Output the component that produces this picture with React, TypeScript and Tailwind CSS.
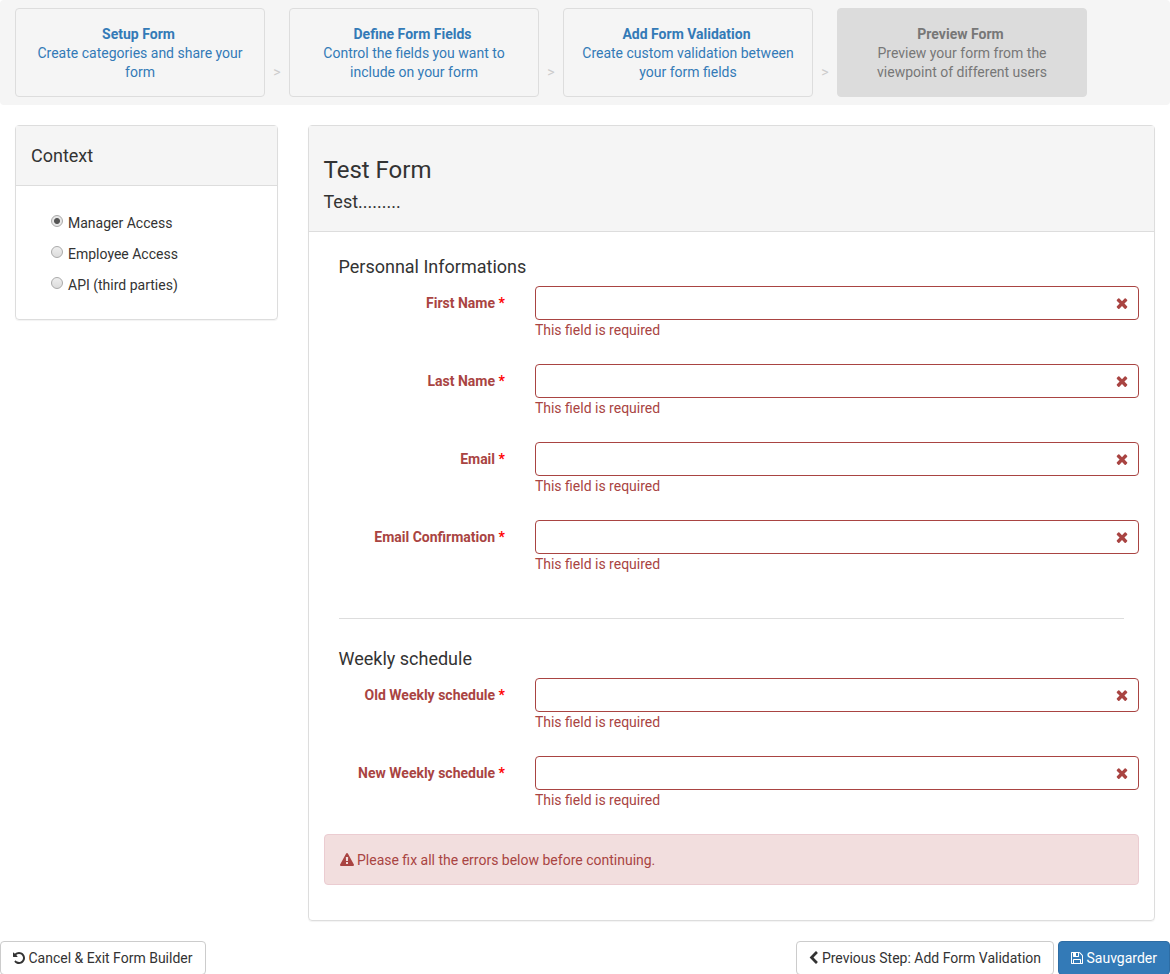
import { Fragment, useState } from "react";

const icons = {
  undo: "M1664 896q0 156-61 298t-164 245-245 164-298 61q-172 0-327-72.5t-264-204.5q-7-10-6.5-22.5t8.5-20.5l137-138q10-9 25-9 16 2 23 12 73 95 179 147t225 52q104 0 198.5-40.5t163.5-109.5 109.5-163.5 40.5-198.5-40.5-198.5-109.5-163.5-163.5-109.5-198.5-40.5q-98 0-188 35.5t-160 101.5l137 138q31 30 14 69-17 40-59 40h-448q-26 0-45-19t-19-45v-448q0-42 40-59 39-17 69 14l130 129q107-101 244.5-156.5t284.5-55.5q156 0 298 61t245 164 164 245 61 298z",
  chevronLeft:
    "M1427 301l-531 531 531 531q19 19 19 45t-19 45l-166 166q-19 19-45 19t-45-19l-742-742q-19-19-19-45t19-45l742-742q19-19 45-19t45 19l166 166q19 19 19 45t-19 45z",
  save: "M512 1536h768v-384h-768v384zm896 0h128v-896q0-14-10-38.5t-20-34.5l-281-281q-10-10-34-20t-39-10v416q0 40-28 68t-68 28h-576q-40 0-68-28t-28-68v-416h-128v1280h128v-416q0-40 28-68t68-28h832q40 0 68 28t28 68v416zm-384-928v-320q0-13-9.5-22.5t-22.5-9.5h-192q-13 0-22.5 9.5t-9.5 22.5v320q0 13 9.5 22.5t22.5 9.5h192q13 0 22.5-9.5t9.5-22.5zm640 32v928q0 40-28 68t-68 28h-1344q-40 0-68-28t-28-68v-1344q0-40 28-68t68-28h928q40 0 88 20t76 48l280 280q28 28 48 76t20 88z",
  warning:
    "M1024 1375v-190q0-14-9.5-23.5t-22.5-9.5h-192q-13 0-22.5 9.5t-9.5 23.5v190q0 14 9.5 23.5t22.5 9.5h192q13 0 22.5-9.5t9.5-23.5zm-2-374l18-459q0-12-10-19-13-11-24-11h-220q-11 0-24 11-10 7-10 21l17 457q0 10 10 16.5t24 6.5h185q14 0 23.5-6.5t10.5-16.5zm-14-934l768 1408q35 63-2 126-17 29-46.5 46t-63.5 17h-1536q-34 0-63.5-17t-46.5-46q-37-63-2-126l768-1408q17-31 47-49t65-18 65 18 47 49z",
  times:
    "M1490 1322q0 40-28 68l-136 136q-28 28-68 28t-68-28l-294-294-294 294q-28 28-68 28t-68-28l-136-136q-28-28-28-68t28-68l294-294-294-294q-28-28-28-68t28-68l136-136q28-28 68-28t68 28l294 294 294-294q28-28 68-28t68 28l136 136q28 28 28 68t-28 68l-294 294 294 294q28 28 28 68z",
};

function Icon({
  name,
  viewBox = "0 0 1792 1792",
  className,
}: {
  name: keyof typeof icons;
  viewBox?: string;
  className: string;
}) {
  return (
    <svg viewBox={viewBox} fill="currentColor" aria-hidden="true" className={className}>
      <path d={icons[name]} />
    </svg>
  );
}

const steps = [
  { title: "Setup Form", text: "Create categories and share your form" },
  { title: "Define Form Fields", text: "Control the fields you want to include on your form" },
  { title: "Add Form Validation", text: "Create custom validation between your form fields" },
  { title: "Preview Form", text: "Preview your form from the viewpoint of different users", active: true },
];

function Steps() {
  return (
    <nav className="flex items-end rounded bg-[#f5f5f5] px-[15px] py-2">
      {steps.map((step, i) => (
        <Fragment key={step.title}>
          {i > 0 && <span className="w-6 shrink-0 pb-[15px] text-center leading-[19px] text-[#ccc]">&gt;</span>}
          <a
            href="#"
            aria-current={step.active ? "step" : undefined}
            className={`w-[250px] rounded border px-[15px] pt-4 pb-3.5 text-center leading-[19px] ${
              step.active ? "border-[#dcdcdc] bg-[#dcdcdc] text-[#777]" : "border-[#ddd] text-[#337ab7]"
            }`}
          >
            <strong className="block pr-[3px] font-bold">{step.title}</strong>
            {step.text}
          </a>
        </Fragment>
      ))}
    </nav>
  );
}

function ContextPanel() {
  const [role, setRole] = useState("Manager Access");
  return (
    <aside className="rounded border border-[#ddd] shadow-[0_1px_1px_rgba(0,0,0,0.05)]">
      <h2 className="border-b border-[#ddd] bg-[#f5f5f5] px-[15px] py-5 text-lg leading-[19px]">Context</h2>
      <div className="flex flex-col gap-[11px] px-[35px] pt-[27px] pb-6">
        {["Manager Access", "Employee Access", "API (third parties)"].map((name) => (
          <label key={name} className="flex items-start gap-[5px] leading-5">
            <input
              type="radio"
              name="context"
              checked={role === name}
              onChange={() => setRole(name)}
              className="mt-[2px] h-3 w-3 shrink-0 appearance-none rounded-full border border-[#aaa] bg-linear-to-b from-[#eee] to-[#dcdcdc] checked:bg-[radial-gradient(circle,#555_0_2.5px,#e6e6e6_3.5px)]"
            />
            {name}
          </label>
        ))}
      </div>
    </aside>
  );
}

function Field({ label }: { label: string }) {
  const id = label.toLowerCase().replaceAll(" ", "-");
  return (
    <div className="flex text-[#a94442]">
      <label htmlFor={id} className="w-1/4 pt-[7px] pr-[15px] text-right leading-5 font-bold">
        {label} <span className="text-[#f00]">*</span>
      </label>
      <div className="w-3/4 px-[15px]">
        <div className="relative">
          <input
            id={id}
            type="text"
            aria-invalid="true"
            aria-describedby={`${id}-error`}
            className="block h-[34px] w-full rounded border border-[#a94442] bg-white pr-10 pl-3 text-[#555] outline-none"
          />
          <Icon name="times" className="pointer-events-none absolute top-[9px] right-[9px] h-4 w-4" />
        </div>
        <p id={`${id}-error`} className="leading-5">
          This field is required
        </p>
      </div>
    </div>
  );
}

function Section({ title, fields }: { title: string; fields: string[] }) {
  return (
    <section>
      <h3 className="mb-[9px] px-[30px] text-lg leading-5">{title}</h3>
      <div className="flex flex-col gap-6">
        {fields.map((f) => (
          <Field key={f} label={f} />
        ))}
      </div>
    </section>
  );
}

const button = "h-[34px] rounded border px-3 leading-5";

export default function App() {
  return (
    <div className="bg-white font-[Roboto,sans-serif] text-sm text-[#333]">
      <Steps />
      <div className="mt-5 flex items-start">
        <div className="w-1/4 px-[15px]">
          <ContextPanel />
        </div>
        <div className="w-3/4 px-[15px]">
          <form className="rounded border border-[#ddd] shadow-[0_1px_1px_rgba(0,0,0,0.05)]">
            <header className="border-b border-[#ddd] bg-[#f5f5f5] px-[15px] pt-[31px] pb-5">
              <h1 className="text-2xl leading-[26px]">Test Form</h1>
              <p className="mt-[9px] text-lg leading-[19px]">Test.........</p>
            </header>
            <div className="pt-[25px] pb-[35px]">
              <Section
                title="Personnal Informations"
                fields={["First Name", "Last Name", "Email", "Email Confirmation"]}
              />
              <hr className="mx-[30px] mt-11 mb-[30px] border-[#ddd]" />
              <Section title="Weekly schedule" fields={["Old Weekly schedule", "New Weekly schedule"]} />
              <div
                role="alert"
                className="mx-[15px] mt-6 rounded border border-[#ebccd1] bg-[#f2dede] px-[15px] pt-[15px] pb-3.5 leading-5 text-[#a94442]"
              >
                <Icon name="warning" className="inline-block h-[14px] w-[14px] align-[-2px]" /> Please fix all the
                errors below before continuing.
              </div>
            </div>
          </form>
        </div>
      </div>
      <footer className="mt-5 flex gap-1">
        <button type="button" className={`${button} mr-auto border-[#ccc] bg-white`}>
          <Icon name="undo" viewBox="128 0 1536 1792" className="inline-block h-[14px] w-3 align-[-2px]" /> Cancel
          &amp; Exit Form Builder
        </button>
        <button type="button" className={`${button} border-[#ccc] bg-white`}>
          <Icon name="chevronLeft" viewBox="320 0 1152 1792" className="inline-block h-[14px] w-[9px] align-[-2px]" />{" "}
          Previous Step: Add Form Validation
        </button>
        <button type="button" className={`${button} border-[#2e6da4] bg-[#337ab7] text-white`}>
          <Icon name="save" viewBox="128 0 1536 1792" className="inline-block h-[14px] w-3 align-[-2px]" /> Sauvgarder
        </button>
      </footer>
    </div>
  );
}
